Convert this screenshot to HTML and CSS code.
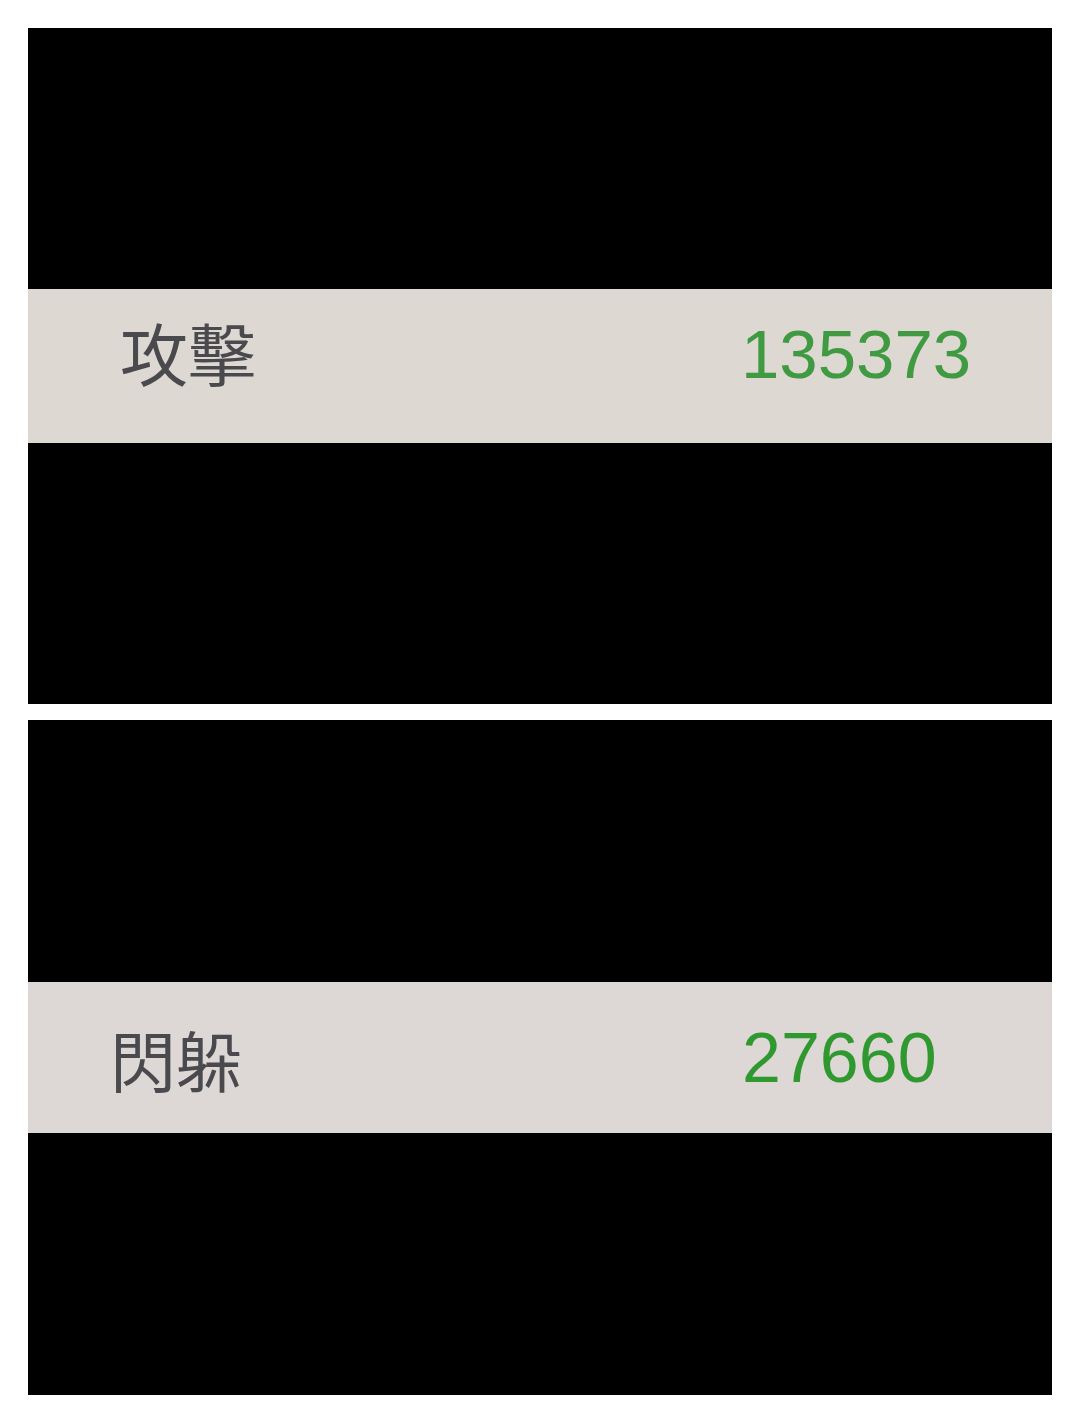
FILE: index.html
```html
<!DOCTYPE html>
<html lang="zh-Hant">
    <head>
        <meta charset="UTF-8">
        <meta name="viewport" content="width=device-width, initial-scale=1.0">
        <title>屬性</title>
        <link rel="stylesheet" href="styles.css">
    </head>
    <body>
        <div class="sheet">
            <div class="panel">
                <div class="stat stat-atk">
                    <span class="stat-name">攻擊</span>
                    <span class="stat-num">135373</span>
                </div>
            </div>
            <div class="panel">
                <div class="stat stat-dodge">
                    <span class="stat-name">閃躲</span>
                    <span class="stat-num">27660</span>
                </div>
            </div>
        </div>
    </body>
</html>
```

FILE: styles.css
```css
*{
    margin: 0;
    padding: 0;
    box-sizing: border-box;
}
body{
    background-color: #fff;
    font-family: "Liberation Sans", "Noto Sans CJK TC", sans-serif;
}
.sheet{
    padding: 28px;
    display: flex;
    flex-direction: column;
    gap: 16px;
}
.panel{
    height: 676px;
    background-color: #000;
    display: flex;
    flex-direction: column;
    justify-content: center;
}
.panel + .panel{
    height: 675px;
}
.stat{
    display: flex;
    align-items: center;
}
.stat-name{
    font-family: "Noto Sans CJK TC", sans-serif;
    color: #4a494e;
    width: 0;
    white-space: nowrap;
}
.stat-num{
    font-family: "Liberation Sans", sans-serif;
}
/* 攻擊 */
.stat-atk{
    height: 154px;
    background-color: #ddd8d1;
    padding: 0 0 30px 92px;
}
.stat-atk .stat-name{
    font-size: 68px;
}
.stat-atk .stat-num{
    margin-left: 621px;
    font-size: 69px;
    color: #3f9a42;
    padding-top: 6px;
}
/* 閃躲 */
.stat-dodge{
    height: 151px;
    background-color: #ddd7d5;
    padding: 0 0 0 82px;
}
.stat-dodge .stat-name{
    font-size: 66px;
}
.stat-dodge .stat-num{
    margin-left: 632px;
    font-size: 70px;
    color: #2f982f;
}
```
